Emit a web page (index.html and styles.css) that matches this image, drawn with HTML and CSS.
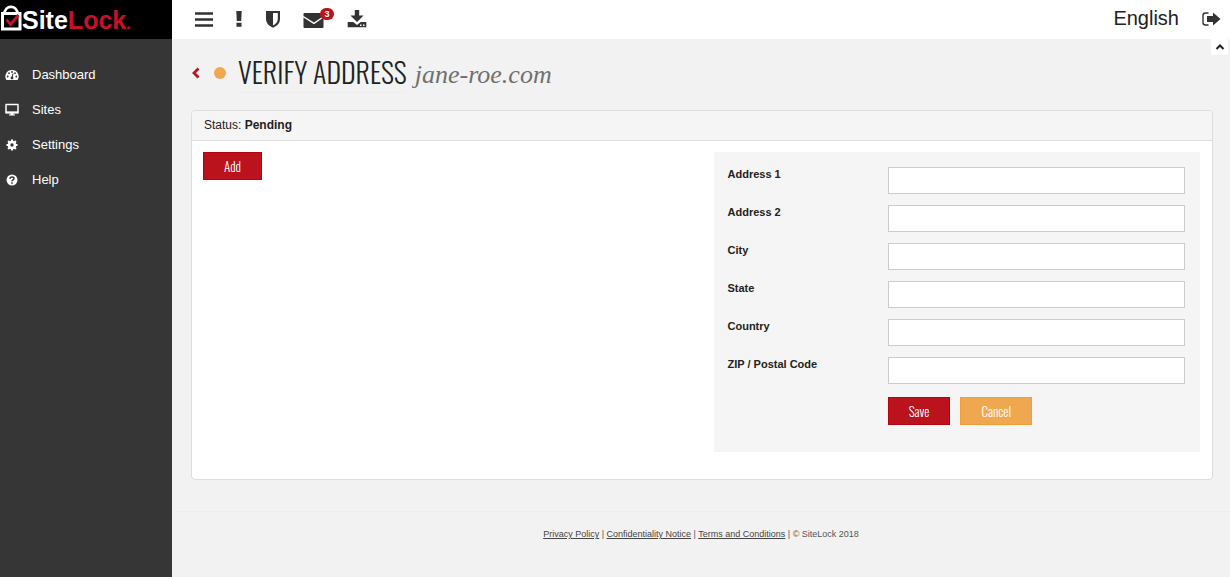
FILE: index.html
```html
<!DOCTYPE html>
<html lang="en">
<head>
  <meta charset="UTF-8">
  <title>SiteLock - Verify Address</title>
  <link rel="stylesheet" href="styles.css">
</head>
<body>
  <div class="sidebar">
    <a href="#" class="logo">
      <svg width="22" height="26" viewBox="0 0 22 26">
        <path d="M4.500 9C4.500-.5 17.500-.5 17.500 9" fill="none" stroke="#fff" stroke-width="2.800"/>
        <path d="M2.500 8.500h17.500v15.500h-17.500z" fill="none" stroke="#fff" stroke-width="3"/>
        <path d="M6.500 14.500l4 5L18.500 10" fill="none" stroke="#c8102e" stroke-width="2.800"/>
      </svg>
      <span class="logo-text">Site<span class="logo-red">Lock<small>.</small></span></span>
    </a>
    <nav class="menu">
      <a href="#">
        <svg width="14" height="14" viewBox="0 0 14 14">
          <path d="M7 2a6.500 6.500 0 0 0-5.600 10h11.200A6.500 6.500 0 0 0 7 2z" fill="#fff"/>
          <g fill="#363636"><circle cx="2.700" cy="8.500" r=".9"/><circle cx="4" cy="5.200" r=".9"/><circle cx="7" cy="4" r=".9"/><circle cx="10" cy="5.200" r=".9"/><circle cx="11.300" cy="8.500" r=".9"/><circle cx="7" cy="10" r="1.400"/></g>
          <path d="M7 10l1-4.500" stroke="#363636"/>
        </svg>
        Dashboard
      </a>
      <a href="#">
        <svg width="14" height="14" viewBox="0 0 14 14">
          <path d="M1 1.500h12v8H1z" fill="none" stroke="#fff" stroke-width="1.500" stroke-linejoin="round"/>
          <path d="M.5 8.500h13v2H.5zM5.500 10h3v1.500H10v1H4v-1h1.500z" fill="#fff"/>
        </svg>
        Sites
      </a>
      <a href="#">
        <svg width="14" height="14" viewBox="0 0 14 14">
          <circle cx="7" cy="7" r="3" fill="none" stroke="#fff" stroke-width="2.600"/>
          <path d="M7 1.500v2M7 10.500v2M1.500 7h2M10.500 7h2M3.100 3.100l1.400 1.400M9.500 9.500l1.400 1.400M3.100 10.900l1.400-1.400M9.500 4.500l1.400-1.400" stroke="#fff" stroke-width="2.200"/>
        </svg>
        Settings
      </a>
      <a href="#">
        <svg width="14" height="14" viewBox="0 0 14 14">
          <circle cx="7" cy="7" r="5.500" fill="#fff"/>
          <path d="M5 5.800C5 3.300 9 3.500 9 5.600 9 7 7 6.800 7 8.300" fill="none" stroke="#363636" stroke-width="1.500"/>
          <path d="M6.200 9.200h1.600v1.500H6.200z" fill="#363636"/>
        </svg>
        Help
      </a>
    </nav>
  </div>

  <div class="main">
    <header class="topbar">
      <div class="tools">
        <button type="button" aria-label="Menu">
          <svg width="18" height="20" viewBox="0 0 18 20"><path d="M0 4.500h18M0 10.500h18M0 16.500h18" stroke="#333" stroke-width="2.400"/></svg>
        </button>
        <button type="button" aria-label="Alerts">
          <svg width="8" height="20" viewBox="0 0 8 20"><path d="M1.300 2h5.400L6.200 12H1.800zM1.500 13.700h5v4h-5z" fill="#333"/></svg>
        </button>
        <button type="button" aria-label="Security">
          <svg width="16" height="20" viewBox="0 0 16 20"><path d="M1 2h14v8c0 4.500-3.500 7-7 8.800C4.500 17 1 14.500 1 10z" fill="#333"/><path d="M8 4h4.800v6c0 3-2 4.800-4.800 6.500z" fill="#fff"/></svg>
        </button>
        <button type="button" class="mail" aria-label="Messages">
          <svg width="22" height="20" viewBox="0 0 22 20"><path d="M1.500 4h19v3L11 13.500.5 7V5a1 1 0 0 1 1-1z" fill="#333"/><path d="M.5 8.500L11 15.300l9.500-6.800V18a1 1 0 0 1-1 1h-18a1 1 0 0 1-1-1z" fill="#333"/></svg>
          <span class="badge">3</span>
        </button>
        <button type="button" aria-label="Downloads">
          <svg width="20" height="20" viewBox="0 0 20 20"><path d="M7.800 1h4.400v5.500h4.300L10 13 3.500 6.500h4.300z" fill="#333"/><path d="M.7 13h5.600L10 16l3.700-3h5.600v5.300H.7z" fill="#333"/><path d="M13 15.500h1.500V17H13zM16 15.500h1.500V17H16z" fill="#fff"/></svg>
        </button>
      </div>
      <div class="account">
        <a href="#">English</a>
        <a href="#" aria-label="Log out">
          <svg width="20" height="20" viewBox="0 0 20 20"><path d="M7.500 4H4.500a2.500 2.500 0 0 0-2.500 2.500v7A2.500 2.500 0 0 0 4.500 16h3" fill="none" stroke="#333" stroke-width="1.400"/><path d="M6 7h6V3.500l7.500 6.500-7.500 6.500V13H6z" fill="#333"/></svg>
        </a>
      </div>
      <button type="button" class="collapse" aria-label="Collapse">
        <svg width="10" height="8" viewBox="0 0 10 8"><path d="M1.500 6L5 2.500 8.500 6" fill="none" stroke="#222" stroke-width="2"/></svg>
      </button>
    </header>

    <div class="content">
      <div class="title">
        <a href="#" class="back" aria-label="Back">
          <svg width="10" height="12" viewBox="0 0 10 12"><path d="M7.500 1.500L3 6l4.500 4.500" fill="none" stroke="#bb131e" stroke-width="2.800"/></svg>
        </a>
        <span class="dot"></span>
        <h1>VERIFY ADDRESS</h1>
        <span class="site-name">jane-roe.com</span>
      </div>

      <div class="panel">
        <div class="panel-heading">Status: <b>Pending</b></div>
        <div class="panel-body">
          <div>
            <button type="button" class="btn">Add</button>
          </div>
          <form class="address-form">
            <label for="address1">Address 1</label>
            <input type="text" id="address1">
            <label for="address2">Address 2</label>
            <input type="text" id="address2">
            <label for="city">City</label>
            <input type="text" id="city">
            <label for="state">State</label>
            <input type="text" id="state">
            <label for="country">Country</label>
            <input type="text" id="country">
            <label for="zip">ZIP / Postal Code</label>
            <input type="text" id="zip">
            <div class="form-buttons">
              <button type="button" class="btn">Save</button>
              <button type="button" class="btn btn-cancel">Cancel</button>
            </div>
          </form>
        </div>
      </div>
    </div>

    <footer class="footer">
      <a href="#">Privacy Policy</a> | <a href="#">Confidentiality Notice</a> | <a href="#">Terms and Conditions</a> | © SiteLock 2018
    </footer>
  </div>
</body>
</html>
```

FILE: styles.css
```css
* {
  box-sizing: border-box;
}

body {
  display: flex;
  min-height: 100vh;
  margin: 0;
  font-family: "Liberation Sans", Arial, sans-serif;
  font-size: 12px;
  color: #222;
  background-color: #f2f2f2;
}

svg {
  display: block;
  flex-shrink: 0;
}

button {
  padding: 0;
  border: 0;
  background: none;
  cursor: pointer;
}

.sidebar {
  flex: 0 0 172px;
  background-color: #363636;
}

.logo {
  display: flex;
  align-items: center;
  height: 39px;
  padding-bottom: 4px;
  background-color: #000;
  color: #fff;
  text-decoration: none;
}

.logo-text {
  padding-top: 5px;
  font-size: 25px;
  font-weight: bold;
}

.logo-red {
  color: #c8102e;
}

.logo small {
  font-size: 16px;
}

.menu {
  padding-top: 18px;
}

.menu a {
  display: flex;
  align-items: center;
  gap: 13px;
  height: 35px;
  padding-left: 5px;
  font-size: 13px;
  color: #fff;
  text-decoration: none;
}

.main {
  flex: 1;
  min-width: 0;
}

.topbar {
  position: relative;
  display: flex;
  align-items: center;
  justify-content: space-between;
  height: 39px;
  padding: 0 9px 2px 23px;
  background-color: #fff;
}

.tools {
  display: flex;
  gap: 22px;
}

.mail {
  position: relative;
}

.badge {
  position: absolute;
  top: -1px;
  left: 17px;
  width: 14px;
  border-radius: 6px;
  background-color: #bb131e;
  color: #fff;
  font-size: 9px;
  font-weight: bold;
  line-height: 12px;
  text-align: center;
}

.account {
  display: flex;
  align-items: center;
  gap: 22px;
}

.account a {
  font-size: 20px;
  color: #222;
  text-decoration: none;
}

.collapse {
  position: absolute;
  top: 39px;
  right: 2px;
  display: flex;
  align-items: center;
  justify-content: center;
  width: 17px;
  height: 16px;
  border-radius: 0 0 3px 3px;
  background-color: #fff;
}

.content {
  padding: 14px 17px 0 19px;
}

.title {
  display: flex;
  align-items: center;
  height: 39px;
  margin-bottom: 18px;
}

.dot {
  width: 12px;
  height: 12px;
  margin: 0 12px 0 13px;
  border-radius: 50%;
  background-color: #f0a850;
}

h1 {
  margin: 0 8px 0 0;
  border-bottom: 1px solid #eee;
  font-family: Oswald, "Liberation Sans Narrow", sans-serif;
  font-size: 28px;
  font-weight: 300;
  line-height: 40px;
}

.site-name {
  padding-top: 4px;
  font-family: "Liberation Serif", serif;
  font-size: 26px;
  font-style: italic;
  color: #707070;
}

.panel {
  border: 1px solid #ddd;
  border-radius: 4px;
  background-color: #fff;
}

.panel-heading {
  padding: 0 12px;
  border-bottom: 1px solid #ddd;
  border-radius: 4px 4px 0 0;
  background-color: #f5f5f5;
  line-height: 29px;
}

.panel-body {
  display: grid;
  grid-template-columns: 1fr 1fr;
  gap: 24px;
  padding: 11px 12px 27px 11px;
}

.btn {
  height: 28px;
  padding: 0 20px;
  border: 1px solid #b00610;
  background-color: #bb131e;
  color: #fff;
  font-family: Oswald, "Liberation Sans Narrow", sans-serif;
  font-size: 13px;
  font-weight: 300;
  line-height: 24px;
}

.btn-cancel {
  border-color: #ee9f3b;
  background-color: #f0a850;
}

.address-form {
  display: grid;
  grid-template-columns: 35fr 65fr;
  row-gap: 11px;
  padding: 15px 15px 27px 14px;
  background-color: #f5f5f5;
}

.address-form label {
  font-size: 11px;
  font-weight: bold;
  line-height: 14px;
}

.address-form input {
  width: 100%;
  height: 27px;
  padding: 0 6px;
  border: 1px solid #ccc;
  background-color: #fff;
}

.form-buttons {
  grid-column: 2;
  display: flex;
  gap: 10px;
  padding-top: 2px;
}

.footer {
  margin-top: 31px;
  padding-top: 16px;
  border-top: 1px solid #eee;
  font-size: 9px;
  line-height: 12px;
  color: #555;
  text-align: center;
}

.footer a {
  color: #444;
}
```
